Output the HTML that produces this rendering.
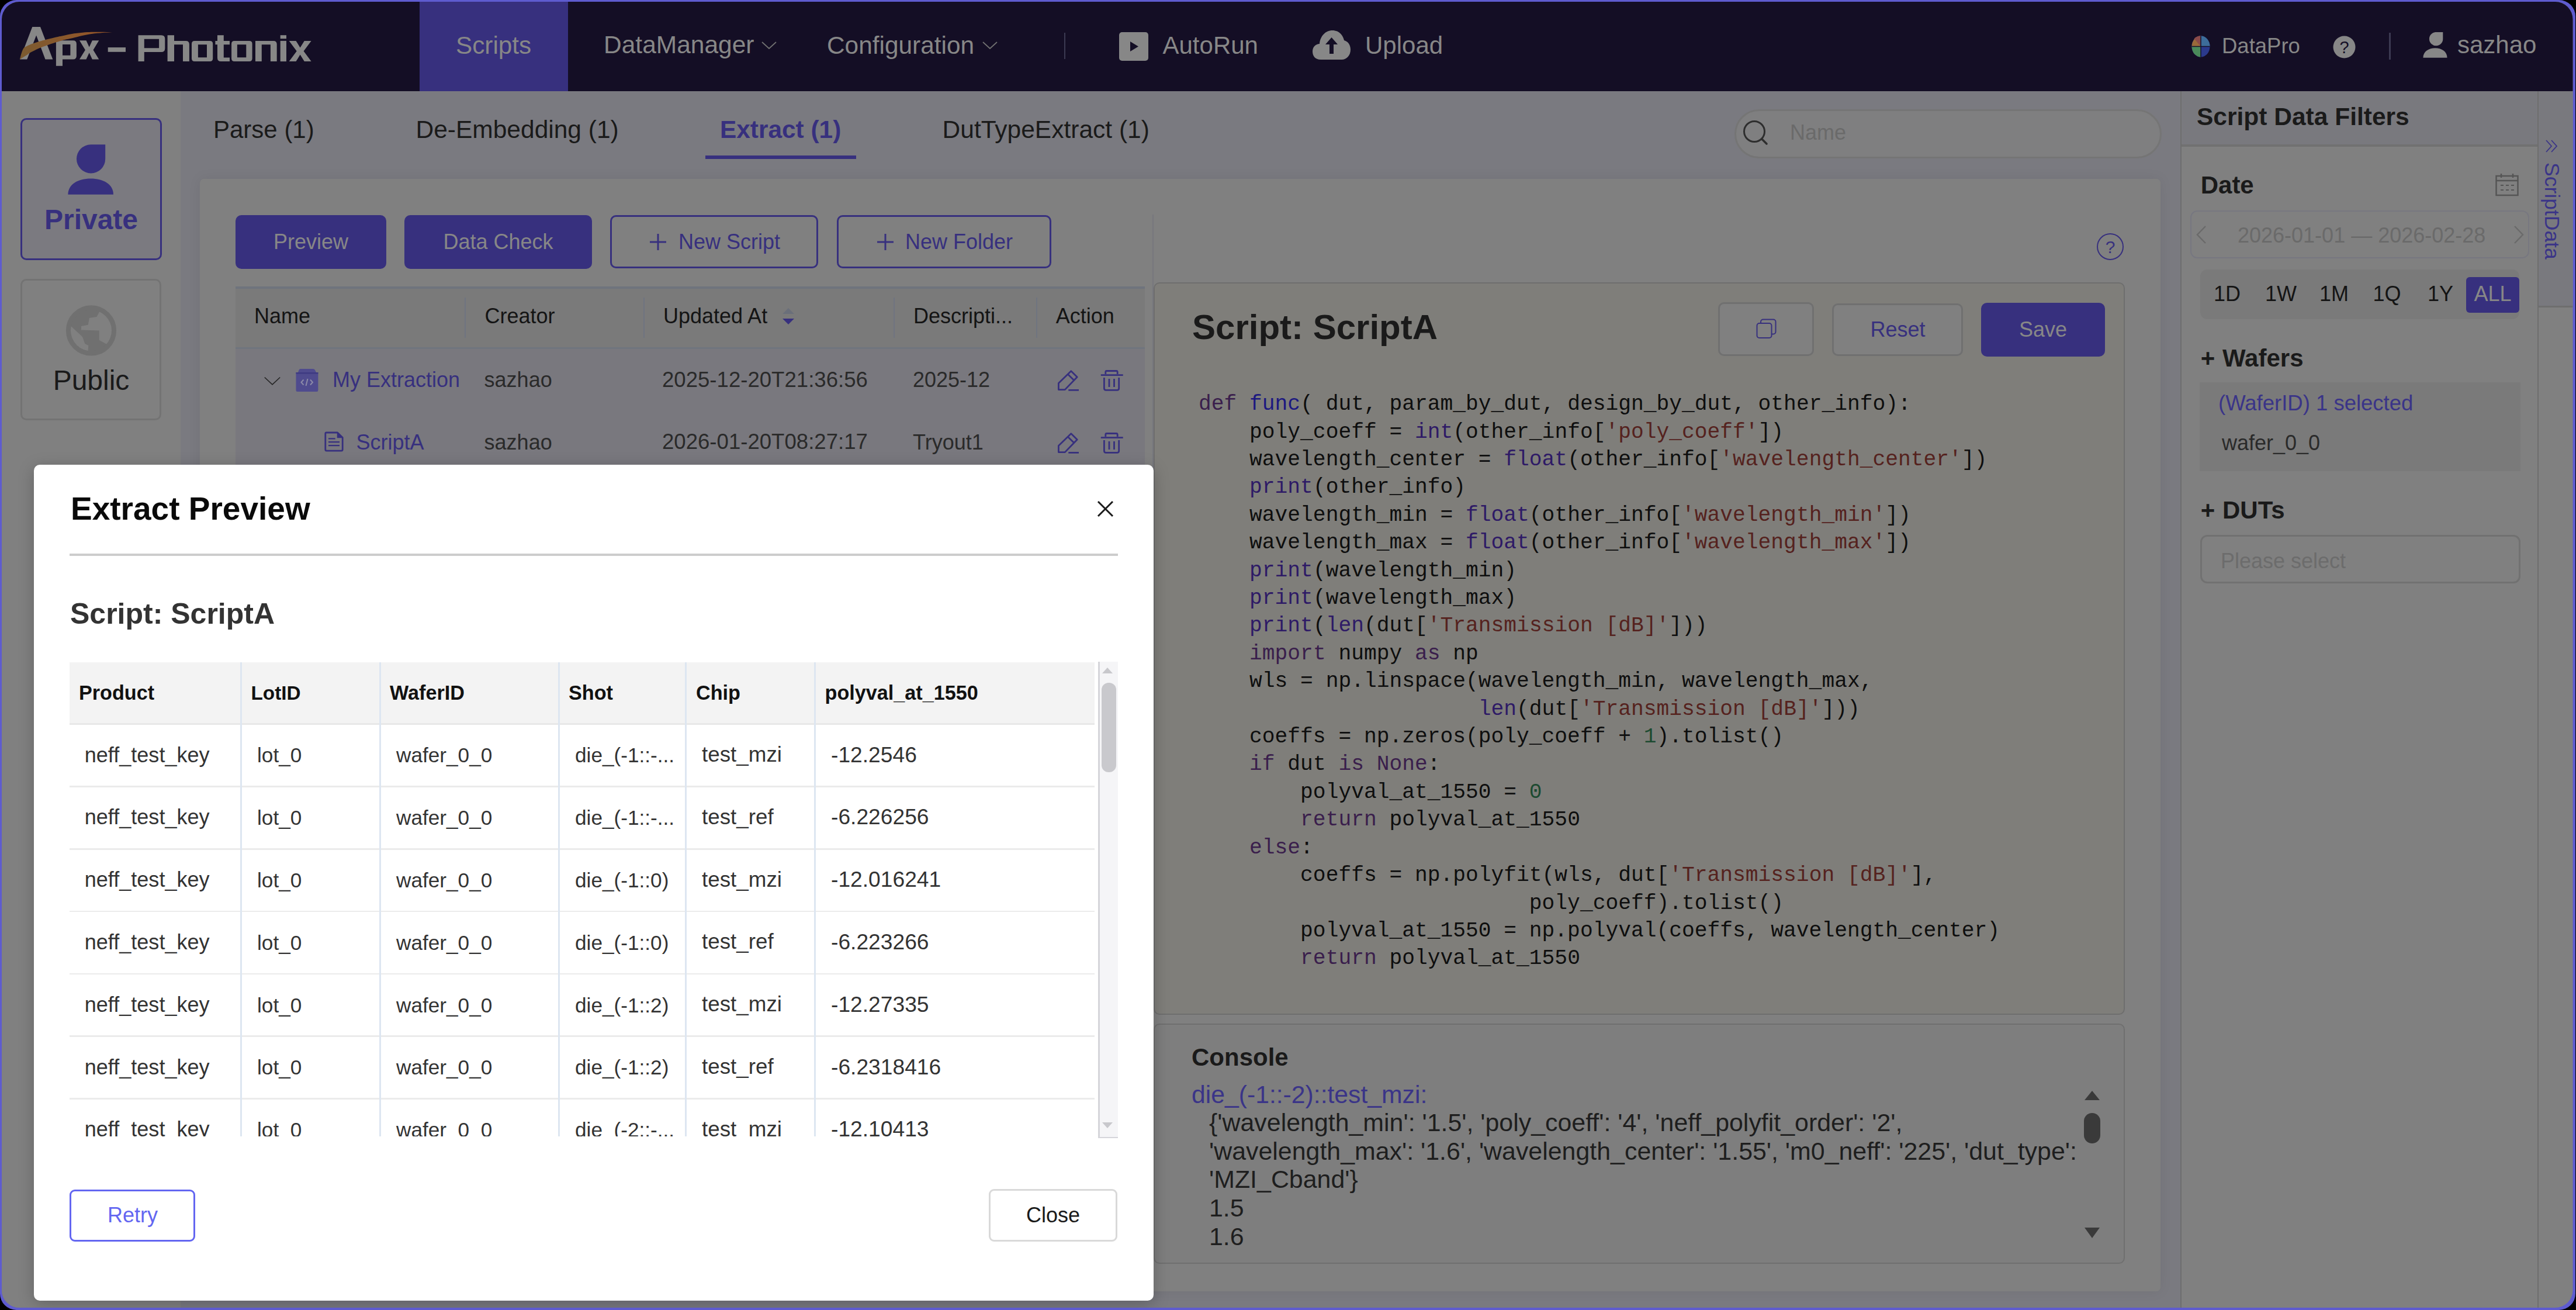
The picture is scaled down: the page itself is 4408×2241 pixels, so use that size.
<!DOCTYPE html>
<html><head><meta charset="utf-8"><title>Apx Photonix</title>
<style>
html,body{margin:0;padding:0;background:#000;}
body{width:4408px;height:2241px;position:relative;overflow:hidden;font-family:"Liberation Sans",sans-serif;}
.frame{position:absolute;left:0;top:0;width:4407px;height:2241px;border-radius:28px;background:#5e5bcf;}
.screen{position:absolute;left:0;top:0;width:4408px;height:2241px;clip-path:inset(3px 5.5px 4px 3px round 30px);background:#808080;}
.t{position:absolute;white-space:pre;}
.r{position:absolute;}
</style></head><body>
<div class="frame"></div>
<div class="screen">
<div class="r" style="left:0.0px;top:0.0px;width:4408.0px;height:156.0px;background:#140e25;"></div>
<svg class="r" style="left:0;top:0;width:560px;height:156px" viewBox="0 0 560 156"><defs><linearGradient id="sw" x1="0" y1="0" x2="1" y2="0"><stop offset="0" stop-color="#7a5a30"/><stop offset="1" stop-color="#9a5528"/></linearGradient></defs><path fill="#878787" d="M34,101.6 L55.3,46.1 L69,46.1 L90.3,101.6 L77.5,101.6 L62.1,60.6 L46.3,101.6 Z"/><path fill="#878787" fill-rule="evenodd" d="M95.9,112.7 V69.2 H125 Q130.9,69.2 130.9,75 V95.8 Q130.9,101.6 125,101.6 H107 V112.7 Z M107,76 H120.4 V94.8 H107 Z"/><path fill="#878787" d="M136,69.2 H147.5 L152.7,80.5 L157.9,69.2 H169.3 L159.5,85.4 L169.3,101.6 H157.9 L152.7,90.3 L147.5,101.6 H136 L145.9,85.4 Z"/><rect x="184.7" y="81.1" width="30.3" height="7.7" fill="#878787"/><path fill="#878787" fill-rule="evenodd" d="M236.6,105.1 V60.2 H276 Q282.3,60.2 282.3,66.5 V82.8 Q282.3,89.1 276,89.1 H246.8 V105.1 Z M246.8,66.8 H272.1 V82.3 H246.8 Z"/><path fill="#878787" d="M286.6,105.1 V60.2 H298 V69.9 H318 Q323.9,69.9 323.9,75.8 V105.1 H313 V76.3 H298 V105.1 Z"/><path fill="#878787" fill-rule="evenodd" d="M333,69.9 H359.2 Q364.2,69.9 364.2,74.9 V100.1 Q364.2,105.1 359.2,105.1 H333 Q328,105.1 328,100.1 V74.9 Q328,69.9 333,69.9 Z M338.9,76.3 V98.2 H354 V76.3 Z"/><path fill="#878787" d="M372,60.2 H382.8 V69.9 H393 V76.3 H382.8 V98.4 H393 V105.1 H378 Q372,105.1 372,99 V76.3 H368.4 V69.9 H372 Z"/><path fill="#878787" fill-rule="evenodd" d="M401.1,69.9 H426.6 Q431.6,69.9 431.6,74.9 V100.1 Q431.6,105.1 426.6,105.1 H401.1 Q396.1,105.1 396.1,100.1 V74.9 Q396.1,69.9 401.1,69.9 Z M405.9,76.3 V98.2 H421.3 V76.3 Z"/><path fill="#878787" d="M437,105.1 V69.9 H468 Q473.7,69.9 473.7,75.6 V105.1 H462.9 V76.3 H447.8 V105.1 Z"/><rect x="479.7" y="60.2" width="10.3" height="6" fill="#878787"/><rect x="479.7" y="69.9" width="10.3" height="35.2" fill="#878787"/><path fill="#878787" d="M494.7,69.9 H506.5 L513.6,81.5 L520.8,69.9 H532.6 L519.6,87.5 L532.6,105.1 H520.8 L513.6,93.5 L506.5,105.1 H494.7 L507.7,87.5 Z"/><path fill="url(#sw)" d="M34,101.6 C36,93 38,85 41.2,81.5 C48,77 55,75 59.2,73.4 C70,70 78,68 79.7,67.5 C95,64 100,62.5 106.1,61.5 C120,58.5 125,57.5 131.7,56.8 C145,55 155,54.8 161.6,54.8 C175,54.6 185,54.8 192.4,55.3 C185,55.6 175,56 161.6,57.2 C150,58.5 140,61 131.7,63.2 C120,66 112,67.5 106.1,69.2 C95,72.5 85,75.5 79.7,77.7 C70,81 64,83.5 59.2,86.2 C52,89.5 49,91.5 46.3,93.9 C40,97.5 37,99.5 34,101.6 Z"/></svg>
<div class="r" style="left:718.0px;top:0.0px;width:254.0px;height:156.0px;background:#37307e;"></div>
<div class="t " style="left:780.0px;top:56.5px;font-size:42.3px;line-height:42.3px;font-weight:400;color:#878787;font-family:'Liberation Sans', sans-serif;">Scripts</div>
<div class="t " style="left:1033.0px;top:56.4px;font-size:42.5px;line-height:42.5px;font-weight:400;color:#878787;font-family:'Liberation Sans', sans-serif;">DataManager</div>
<svg class="r" style="left:1302.0px;top:70.0px;width:28.0px;height:16.0px;" viewBox="0 0 28 16" preserveAspectRatio="none"><path d="M2 2 L14 13 L26 2" fill="none" stroke="#707070" stroke-width="1.8"/></svg>
<div class="t " style="left:1415.0px;top:56.5px;font-size:42.4px;line-height:42.4px;font-weight:400;color:#878787;font-family:'Liberation Sans', sans-serif;">Configuration</div>
<svg class="r" style="left:1680.0px;top:70.0px;width:28.0px;height:16.0px;" viewBox="0 0 28 16" preserveAspectRatio="none"><path d="M2 2 L14 13 L26 2" fill="none" stroke="#707070" stroke-width="1.8"/></svg>
<div class="r" style="left:1820.5px;top:56.0px;width:2.5px;height:45.0px;background:#3c3a52;"></div>
<svg class="r" style="left:1915.0px;top:55.0px;width:50.0px;height:49.0px;" viewBox="0 0 50 49" preserveAspectRatio="none"><rect x="0" y="0" width="50" height="49" rx="5" fill="#878787"/><path d="M19 16 L33 24.5 L19 33 Z" fill="#140e25"/></svg>
<div class="t " style="left:1989.5px;top:57.3px;font-size:42px;line-height:42px;font-weight:400;color:#878787;font-family:'Liberation Sans', sans-serif;">AutoRun</div>
<svg class="r" style="left:2246.0px;top:52.0px;width:65.0px;height:50.0px;" viewBox="0 0 65 50" preserveAspectRatio="none"><path d="M14 50 C4 50 0 43 0 36 C0 28 6 23 12 23 C13 10 22 0 34 0 C45 0 52 8 54 17 C61 19 65 25 65 33 C65 43 58 50 50 50 Z" fill="#878787"/><path d="M32.5 12 L43 24 L36 24 L36 40 L29 40 L29 24 L22 24 Z" fill="#140e25"/></svg>
<div class="t " style="left:2336.0px;top:57.3px;font-size:42px;line-height:42px;font-weight:400;color:#878787;font-family:'Liberation Sans', sans-serif;">Upload</div>
<svg class="r" style="left:3750.0px;top:61.0px;width:32.0px;height:37.0px;" viewBox="0 0 32 37" preserveAspectRatio="none"><ellipse cx="16" cy="18.5" rx="15.5" ry="18" fill="#2b3a8c"/><path d="M16 18.5 L16 0.5 A15.5 18 0 0 0 0.5 18.5 Z" fill="#9a6a3a"/><path d="M16 18.5 L16 0.5 A15.5 18 0 0 0 4.5 5 Z" fill="#8a4a4a"/><path d="M16 18.5 L0.5 18.5 A15.5 18 0 0 0 16 36.5 Z" fill="#4a8a5a"/><path d="M16 18.5 L16 0.5 A15.5 18 0 0 1 31.5 18.5 Z" fill="#3d6d9a"/><path d="M16 0.5 V36.5 M0.5 18.5 H31.5" stroke="#15102a" stroke-width="1.5"/></svg>
<div class="t " style="left:3802.0px;top:60.5px;font-size:36.5px;line-height:36.5px;font-weight:400;color:#878787;font-family:'Liberation Sans', sans-serif;">DataPro</div>
<svg class="r" style="left:3992.0px;top:61.0px;width:39.0px;height:39.0px;" viewBox="0 0 39 39" preserveAspectRatio="none"><circle cx="19.5" cy="19.5" r="19" fill="#878787"/><text x="19.5" y="30" text-anchor="middle" font-family="Liberation Sans" font-weight="400" font-size="29" fill="#140e25">?</text></svg>
<div class="r" style="left:4088.0px;top:56.0px;width:2.5px;height:46.0px;background:#3c3a52;"></div>
<svg class="r" style="left:4100px;top:0;width:120px;height:156px" viewBox="4100 0 120 156"><path fill="#878787" d="M4167.5,55 H4180.3 V66.7 A11.7 11.7 0 1 1 4167.5 55 Z"/><path fill="#878787" d="M4146.4,98.8 C4146.4,88 4156,82.2 4167,82.2 C4178,82.2 4187.5,88 4187.5,98.8 Z"/></svg>
<div class="t " style="left:4205.0px;top:56.3px;font-size:42px;line-height:42px;font-weight:400;color:#878787;font-family:'Liberation Sans', sans-serif;">sazhao</div>
<div class="r" style="left:0.0px;top:156.0px;width:309.0px;height:2085.0px;background:#808080;"></div>
<div class="r" style="left:34.5px;top:202.0px;width:242.5px;height:243.0px;background:#7b7a80;border:3px solid #37307e;border-radius:10px;box-sizing:border-box"></div>
<svg class="r" style="left:0;top:0;width:309px;height:720px" viewBox="0 0 309 720"><path fill="#37307e" d="M155.4,247.2 H180.2 V271.8 A24.6 24.6 0 1 1 155.4 247.2 Z"/><path fill="#37307e" d="M116.4,332.8 C116.4,315 134,305.5 155.2,305.5 C176.4,305.5 194,315 194,332.8 Z"/></svg>
<div class="t" style="left:-344.0px;width:1000px;text-align:center;top:352.2px;font-size:48px;line-height:48px;font-weight:700;color:#37307e;">Private</div>
<div class="r" style="left:34.7px;top:477.0px;width:241.8px;height:242.0px;background:#808080;border:3px solid #737373;border-radius:10px;box-sizing:border-box"></div>
<svg class="r" style="left:0;top:0;width:309px;height:720px" viewBox="0 0 309 720"><clipPath id="gc"><circle cx="156" cy="565.4" r="35"/></clipPath><circle cx="156" cy="565.4" r="38.6" fill="none" stroke="#707070" stroke-width="9"/><g clip-path="url(#gc)"><rect x="110" y="520" width="92" height="92" fill="#707070"/><path fill="#808080" d="M169.7,534.3 L170,515 L216,515 L216,605 L180.6,587.7 L169.7,581.8 L169.7,565.4 L139,564.6 L139,557.9 L150.8,555.8 L152.9,544 L165.5,541.9 Z"/><path fill="#808080" d="M122.2,558.7 L141.1,576.3 L145.3,588.1 L151.2,591 L150.8,598.6 L150.8,625 L96,625 L96,558.7 Z"/></g></svg>
<div class="t" style="left:-344.0px;width:1000px;text-align:center;top:627.2px;font-size:48px;line-height:48px;font-weight:400;color:#1a1a1a;">Public</div>
<div class="r" style="left:309.0px;top:156.0px;width:3422.0px;height:2085.0px;background:#7a7a80;"></div>
<div class="t " style="left:365.0px;top:201.3px;font-size:42px;line-height:42px;font-weight:400;color:#1a1a1a;font-family:'Liberation Sans', sans-serif;">Parse (1)</div>
<div class="t " style="left:711.5px;top:200.9px;font-size:42.5px;line-height:42.5px;font-weight:400;color:#1a1a1a;font-family:'Liberation Sans', sans-serif;">De-Embedding (1)</div>
<div class="t " style="left:1232.0px;top:201.0px;font-size:42.4px;line-height:42.4px;font-weight:700;color:#37307e;font-family:'Liberation Sans', sans-serif;">Extract (1)</div>
<div class="r" style="left:1207.0px;top:266.0px;width:258.0px;height:6.0px;background:#37307e;"></div>
<div class="t " style="left:1612.6px;top:200.9px;font-size:42.5px;line-height:42.5px;font-weight:400;color:#1a1a1a;font-family:'Liberation Sans', sans-serif;">DutTypeExtract (1)</div>
<div class="r" style="left:2968.0px;top:187.0px;width:731.0px;height:84.0px;background:#7f7f80;border:3px solid #757575;border-radius:42px;box-sizing:border-box"></div>
<svg class="r" style="left:2982.0px;top:205.0px;width:44.0px;height:45.0px;" viewBox="0 0 44 45" preserveAspectRatio="none"><circle cx="20" cy="20" r="17.5" fill="none" stroke="#2e2e2e" stroke-width="3"/><path d="M33 33 L41 41" stroke="#2e2e2e" stroke-width="3.5" stroke-linecap="round"/></svg>
<div class="t " style="left:3063.0px;top:209.4px;font-size:36px;line-height:36px;font-weight:400;color:#6a6a6a;font-family:'Liberation Sans', sans-serif;">Name</div>
<div class="r" style="left:342.0px;top:306.0px;width:3355.0px;height:1903.0px;background:#808080;border-radius:7px;box-shadow:0 0 22px rgba(0,0,0,0.07)"></div>
<div class="r" style="left:403.0px;top:368.0px;width:258.0px;height:92.0px;background:#37307e;border-radius:10px"></div>
<div class="t" style="left:32.0px;width:1000px;text-align:center;top:395.9px;font-size:36px;line-height:36px;font-weight:400;color:#878787;">Preview</div>
<div class="r" style="left:692.0px;top:368.0px;width:321.0px;height:92.0px;background:#37307e;border-radius:10px"></div>
<div class="t" style="left:352.5px;width:1000px;text-align:center;top:395.9px;font-size:36px;line-height:36px;font-weight:400;color:#878787;">Data Check</div>
<div class="r" style="left:1043.5px;top:367.7px;width:356.5px;height:91.3px;background:transparent;border:3px solid #37307e;border-radius:10px;box-sizing:border-box"></div>
<svg class="r" style="left:1111.0px;top:399.0px;width:30.0px;height:30.0px;" viewBox="0 0 30 30" preserveAspectRatio="none"><path d="M15 1 V29 M1 15 H29" stroke="#37307e" stroke-width="3"/></svg>
<div class="t " style="left:1161.0px;top:395.7px;font-size:36px;line-height:36px;font-weight:400;color:#37307e;font-family:'Liberation Sans', sans-serif;">New Script</div>
<div class="r" style="left:1431.7px;top:367.7px;width:367.3px;height:91.3px;background:transparent;border:3px solid #37307e;border-radius:10px;box-sizing:border-box"></div>
<svg class="r" style="left:1499.6px;top:399.0px;width:30.0px;height:30.0px;" viewBox="0 0 30 30" preserveAspectRatio="none"><path d="M15 1 V29 M1 15 H29" stroke="#37307e" stroke-width="3"/></svg>
<div class="t " style="left:1549.0px;top:395.7px;font-size:36px;line-height:36px;font-weight:400;color:#37307e;font-family:'Liberation Sans', sans-serif;">New Folder</div>
<svg class="r" style="left:3587.0px;top:398.0px;width:48.0px;height:48.0px;" viewBox="0 0 48 48" preserveAspectRatio="none"><circle cx="24" cy="24" r="22" fill="none" stroke="#37307e" stroke-width="2"/><text x="24" y="35" text-anchor="middle" font-family="Liberation Sans" font-weight="400" font-size="30" fill="#37307e">?</text></svg>
<div class="r" style="left:403.0px;top:490.0px;width:1556.0px;height:4.0px;background:#6f747d;"></div>
<div class="r" style="left:403.0px;top:494.0px;width:1556.0px;height:100.0px;background:#7a7a7a;"></div>
<div class="r" style="left:403.0px;top:594.0px;width:1556.0px;height:2.5px;background:#70757e;"></div>
<div class="r" style="left:795.0px;top:509.0px;width:2.0px;height:69.0px;background:#6f7480;"></div>
<div class="r" style="left:1101.0px;top:509.0px;width:2.0px;height:69.0px;background:#6f7480;"></div>
<div class="r" style="left:1529.0px;top:509.0px;width:2.0px;height:69.0px;background:#6f7480;"></div>
<div class="r" style="left:1772.5px;top:509.0px;width:2.0px;height:69.0px;background:#6f7480;"></div>
<div class="t " style="left:435.0px;top:523.4px;font-size:36px;line-height:36px;font-weight:400;color:#141414;font-family:'Liberation Sans', sans-serif;">Name</div>
<div class="t " style="left:829.5px;top:523.4px;font-size:36px;line-height:36px;font-weight:400;color:#141414;font-family:'Liberation Sans', sans-serif;">Creator</div>
<div class="t " style="left:1135.0px;top:523.4px;font-size:36px;line-height:36px;font-weight:400;color:#141414;font-family:'Liberation Sans', sans-serif;">Updated At</div>
<svg class="r" style="left:1337.0px;top:527.0px;width:24.0px;height:28.0px;" viewBox="0 0 24 28" preserveAspectRatio="none"><path d="M12 0 L22 10 L2 10 Z" fill="#6a6f7a"/><path d="M12 28 L22 18 L2 18 Z" fill="#37307e"/></svg>
<div class="t " style="left:1563.0px;top:523.4px;font-size:36px;line-height:36px;font-weight:400;color:#141414;font-family:'Liberation Sans', sans-serif;">Descripti...</div>
<div class="t " style="left:1806.7px;top:523.4px;font-size:36px;line-height:36px;font-weight:400;color:#141414;font-family:'Liberation Sans', sans-serif;">Action</div>
<div class="r" style="left:403.0px;top:596.5px;width:1556.0px;height:198.5px;background:#79787e;"></div>
<svg class="r" style="left:440px;top:620px;width:160px;height:160px" viewBox="440 620 160 160"><path d="M452.8,645.5 L466,657.8 L479.2,645.5" fill="none" stroke="#262626" stroke-width="1.7"/><path d="M514,631 H535.5 Q538,631 539,633 L541,637 H544.4 V667.5 Q544.4,670 542,670 H509 Q506.5,670 506.5,667.5 V637 H510 L511.5,633 Q512.5,631 514,631 Z" fill="#4f4b8e"/><rect x="506.5" y="637" width="37.9" height="2.5" fill="#3e3a82"/><path d="M519.5,649.5 L515.5,654 L519.5,658.5 M531,649.5 L535,654 L531,658.5 M526.5,648 L523.5,660" fill="none" stroke="#8c8aa8" stroke-width="2"/><path d="M558.5,740 H577.5 L586.2,748.5 V769 Q586.2,771.2 584,771.2 H558.8 Q556.8,771.2 556.8,769 V742 Q556.8,740 558.5,740 Z" fill="none" stroke="#37307e" stroke-width="2.8" stroke-linejoin="round"/><path d="M577.5,740.5 V748.5 H586" fill="#37307e" stroke="#37307e" stroke-width="1.5"/><path d="M562,750.4 H573.7 M562,756.1 H581 M562,762.2 H581" stroke="#37307e" stroke-width="2.2"/></svg>
<div class="t " style="left:569.0px;top:632.4px;font-size:36px;line-height:36px;font-weight:400;color:#37307e;font-family:'Liberation Sans', sans-serif;">My Extraction</div>
<div class="t " style="left:828.6px;top:632.4px;font-size:36px;line-height:36px;font-weight:400;color:#2a2a2a;font-family:'Liberation Sans', sans-serif;">sazhao</div>
<div class="t " style="left:1133.0px;top:631.9px;font-size:36.6px;line-height:36.6px;font-weight:400;color:#2a2a2a;font-family:'Liberation Sans', sans-serif;">2025-12-20T21:36:56</div>
<div class="t " style="left:1562.0px;top:632.4px;font-size:36px;line-height:36px;font-weight:400;color:#2a2a2a;font-family:'Liberation Sans', sans-serif;">2025-12</div>
<div class="t " style="left:609.6px;top:738.9px;font-size:36px;line-height:36px;font-weight:400;color:#37307e;font-family:'Liberation Sans', sans-serif;">ScriptA</div>
<div class="t " style="left:828.6px;top:738.9px;font-size:36px;line-height:36px;font-weight:400;color:#2a2a2a;font-family:'Liberation Sans', sans-serif;">sazhao</div>
<div class="t " style="left:1133.0px;top:738.4px;font-size:36.6px;line-height:36.6px;font-weight:400;color:#2a2a2a;font-family:'Liberation Sans', sans-serif;">2026-01-20T08:27:17</div>
<div class="t " style="left:1562.0px;top:738.9px;font-size:36px;line-height:36px;font-weight:400;color:#2a2a2a;font-family:'Liberation Sans', sans-serif;">Tryout1</div>
<svg class="r" style="left:1780px;top:620px;width:160px;height:60px" viewBox="1780 620 160 60" fill="none" stroke="#37307e" stroke-width="2.8" stroke-linejoin="round"><path d="M1811.4,655.5 L1832.8,634.8 L1843.2,645 L1822.3,666.6 L1811.4,666.6 Z M1827.3,640.3 L1837.8,650.5 M1828.3,667.4 H1846"/><path d="M1883.8,641.6 H1921.7 M1891.8,640 V636.5 Q1891.8,634.5 1893.8,634.5 H1910.2 Q1912.2,634.5 1912.2,636.5 V640 M1889.4,646 V664.3 Q1889.4,667.3 1892.4,667.3 H1911.7 Q1914.7,667.3 1914.7,664.3 V646 M1898,648 V662 M1906.5,648 V662"/></svg>
<svg class="r" style="left:1780px;top:726.5px;width:160px;height:60px" viewBox="1780 620 160 60" fill="none" stroke="#37307e" stroke-width="2.8" stroke-linejoin="round"><path d="M1811.4,655.5 L1832.8,634.8 L1843.2,645 L1822.3,666.6 L1811.4,666.6 Z M1827.3,640.3 L1837.8,650.5 M1828.3,667.4 H1846"/><path d="M1883.8,641.6 H1921.7 M1891.8,640 V636.5 Q1891.8,634.5 1893.8,634.5 H1910.2 Q1912.2,634.5 1912.2,636.5 V640 M1889.4,646 V664.3 Q1889.4,667.3 1892.4,667.3 H1911.7 Q1914.7,667.3 1914.7,664.3 V646 M1898,648 V662 M1906.5,648 V662"/></svg>
<div class="r" style="left:1972.0px;top:366.6px;width:2.3px;height:1842.4px;background:#76777d;"></div>
<div class="r" style="left:1974.3px;top:483.0px;width:1661.7px;height:1253.0px;background:#7f7e7a;border:2.5px solid #6e6e6e;border-radius:10px;box-sizing:border-box"></div>
<div class="t " style="left:2040.0px;top:529.5px;font-size:60px;line-height:60px;font-weight:700;color:#1a1a1a;font-family:'Liberation Sans', sans-serif;">Script: ScriptA</div>
<div class="r" style="left:2940.0px;top:517.0px;width:163.5px;height:92.0px;background:#808080;border:3px solid #707070;border-radius:10px;box-sizing:border-box"></div>
<svg class="r" style="left:3005.0px;top:544.5px;width:35.0px;height:34.5px;" viewBox="0 0 35 34.5" preserveAspectRatio="none"><rect x="8" y="1.5" width="25.5" height="25" rx="4" fill="none" stroke="#37307e" stroke-width="2"/><rect x="1.5" y="8" width="25" height="25" rx="4" fill="#808080" stroke="#37307e" stroke-width="2"/></svg>
<div class="r" style="left:3135.4px;top:519.0px;width:223.6px;height:90.0px;background:#808080;border:3px solid #707070;border-radius:10px;box-sizing:border-box"></div>
<div class="t" style="left:2747.5px;width:1000px;text-align:center;top:545.9px;font-size:36px;line-height:36px;font-weight:400;color:#37307e;">Reset</div>
<div class="r" style="left:3390.0px;top:518.0px;width:212.0px;height:92.0px;background:#37307e;border-radius:10px"></div>
<div class="t" style="left:2996.0px;width:1000px;text-align:center;top:545.9px;font-size:36px;line-height:36px;font-weight:400;color:#878787;">Save</div>
<div class="t" style="left:2051px;top:668.2px;font-family:'Liberation Mono',monospace;font-size:36.27px;line-height:47.4px;color:#0e0e0e;white-space:pre"><span style="color:#3a1e4c">def</span> <span style="color:#1c1880">func</span>( dut, param_by_dut, design_by_dut, other_info):
    poly_coeff = <span style="color:#2e1a66">int</span>(other_info[<span style="color:#55221e">&#x27;poly_coeff&#x27;</span>])
    wavelength_center = <span style="color:#2e1a66">float</span>(other_info[<span style="color:#55221e">&#x27;wavelength_center&#x27;</span>])
    <span style="color:#2e1a66">print</span>(other_info)
    wavelength_min = <span style="color:#2e1a66">float</span>(other_info[<span style="color:#55221e">&#x27;wavelength_min&#x27;</span>])
    wavelength_max = <span style="color:#2e1a66">float</span>(other_info[<span style="color:#55221e">&#x27;wavelength_max&#x27;</span>])
    <span style="color:#2e1a66">print</span>(wavelength_min)
    <span style="color:#2e1a66">print</span>(wavelength_max)
    <span style="color:#2e1a66">print</span>(<span style="color:#2e1a66">len</span>(dut[<span style="color:#55221e">&#x27;Transmission [dB]&#x27;</span>]))
    <span style="color:#3a1e4c">import</span> numpy <span style="color:#3a1e4c">as</span> np
    wls = np.linspace(wavelength_min, wavelength_max,
                      <span style="color:#2e1a66">len</span>(dut[<span style="color:#55221e">&#x27;Transmission [dB]&#x27;</span>]))
    coeffs = np.zeros(poly_coeff + <span style="color:#1c4a30">1</span>).tolist()
    <span style="color:#3a1e4c">if</span> dut <span style="color:#3a1e4c">is</span> <span style="color:#3a1e4c">None</span>:
        polyval_at_1550 = <span style="color:#1c4a30">0</span>
        <span style="color:#3a1e4c">return</span> polyval_at_1550
    <span style="color:#3a1e4c">else</span>:
        coeffs = np.polyfit(wls, dut[<span style="color:#55221e">&#x27;Transmission [dB]&#x27;</span>],
                          poly_coeff).tolist()
        polyval_at_1550 = np.polyval(coeffs, wavelength_center)
        <span style="color:#3a1e4c">return</span> polyval_at_1550</div>
<div class="r" style="left:1974.3px;top:1751.0px;width:1661.7px;height:411.0px;background:#7e7e7e;border:2.5px solid #6f6f6f;border-radius:10px;box-sizing:border-box"></div>
<div class="t " style="left:2039.0px;top:1787.8px;font-size:42px;line-height:42px;font-weight:700;color:#1a1a1a;font-family:'Liberation Sans', sans-serif;">Console</div>
<div class="t " style="left:2039.0px;top:1850.7px;font-size:42.7px;line-height:42.7px;font-weight:400;color:#3a3488;font-family:'Liberation Sans', sans-serif;">die_(-1::-2)::test_mzi:</div>
<div class="t " style="left:2069.0px;top:1899.0px;font-size:42.9px;line-height:42.9px;font-weight:400;color:#1e1e1e;font-family:'Liberation Sans', sans-serif;">{&#x27;wavelength_min&#x27;: &#x27;1.5&#x27;, &#x27;poly_coeff&#x27;: &#x27;4&#x27;, &#x27;neff_polyfit_order&#x27;: &#x27;2&#x27;,</div>
<div class="t " style="left:2069.0px;top:1947.7px;font-size:42.9px;line-height:42.9px;font-weight:400;color:#1e1e1e;font-family:'Liberation Sans', sans-serif;">&#x27;wavelength_max&#x27;: &#x27;1.6&#x27;, &#x27;wavelength_center&#x27;: &#x27;1.55&#x27;, &#x27;m0_neff&#x27;: &#x27;225&#x27;, &#x27;dut_type&#x27;:</div>
<div class="t " style="left:2069.0px;top:1996.4px;font-size:42.9px;line-height:42.9px;font-weight:400;color:#1e1e1e;font-family:'Liberation Sans', sans-serif;">&#x27;MZI_Cband&#x27;}</div>
<div class="t " style="left:2069.0px;top:2045.1px;font-size:42.9px;line-height:42.9px;font-weight:400;color:#1e1e1e;font-family:'Liberation Sans', sans-serif;">1.5</div>
<div class="t " style="left:2069.0px;top:2093.8px;font-size:42.9px;line-height:42.9px;font-weight:400;color:#1e1e1e;font-family:'Liberation Sans', sans-serif;">1.6</div>
<svg class="r" style="left:3565.0px;top:1864.0px;width:30.0px;height:20.0px;" viewBox="0 0 30 20" preserveAspectRatio="none"><path d="M15 2 L28 18 L2 18 Z" fill="#3a3a3a"/></svg>
<div class="r" style="left:3566.0px;top:1904.0px;width:28.0px;height:52.0px;background:#3a3a3a;border-radius:14px"></div>
<svg class="r" style="left:3565.0px;top:2098.0px;width:30.0px;height:22.0px;" viewBox="0 0 30 22" preserveAspectRatio="none"><path d="M15 20 L28 2 L2 2 Z" fill="#3a3a3a"/></svg>
<div class="r" style="left:3731.0px;top:156.0px;width:613.0px;height:2085.0px;background:#808080;"></div>
<div class="r" style="left:3730.6px;top:156.0px;width:2.6px;height:2085.0px;background:#6e6e6e;"></div>
<div class="r" style="left:3733.2px;top:156.0px;width:608.8px;height:91.0px;background:#79797e;"></div>
<div class="r" style="left:3733.2px;top:247.0px;width:608.8px;height:3.5px;background:#717171;"></div>
<div class="r" style="left:4342.0px;top:156.0px;width:2.0px;height:2085.0px;background:#6e6e6e;"></div>
<div class="r" style="left:4344.0px;top:156.0px;width:64.0px;height:367.0px;background:#79797e;"></div>
<div class="r" style="left:4344.0px;top:523.0px;width:64.0px;height:2.5px;background:#6e6e6e;"></div>
<div class="t " style="left:3759.0px;top:178.5px;font-size:42.5px;line-height:42.5px;font-weight:700;color:#1a1a1a;font-family:'Liberation Sans', sans-serif;">Script Data Filters</div>
<div class="t " style="left:3765.7px;top:296.3px;font-size:42px;line-height:42px;font-weight:700;color:#1a1a1a;font-family:'Liberation Sans', sans-serif;">Date</div>
<svg class="r" style="left:4270.0px;top:296.0px;width:40.0px;height:40.0px;" viewBox="0 0 40 40" preserveAspectRatio="none"><rect x="1.5" y="5" width="37" height="33" fill="none" stroke="#555" stroke-width="2.5"/><path d="M1.5 13 H38.5 M10 1 V8 M30 1 V8" stroke="#555" stroke-width="2.5"/><path d="M9 21 H14 M18 21 H23 M27 21 H32 M9 29 H14 M18 29 H23 M27 29 H32" stroke="#555" stroke-width="2"/></svg>
<div class="r" style="left:3748.0px;top:360.0px;width:580.0px;height:81.5px;background:#808080;border:2.5px solid #777780;border-radius:12px;box-sizing:border-box"></div>
<svg class="r" style="left:3757.0px;top:385.0px;width:20.0px;height:33.0px;" viewBox="0 0 20 33" preserveAspectRatio="none"><path d="M17 2 L3 16.5 L17 31" fill="none" stroke="#6a6a6a" stroke-width="2.5"/></svg>
<div class="t " style="left:3829.0px;top:384.9px;font-size:36px;line-height:36px;font-weight:400;color:#6a6a6a;font-family:'Liberation Sans', sans-serif;">2026-01-01 — 2026-02-28</div>
<svg class="r" style="left:4300.0px;top:385.0px;width:20.0px;height:33.0px;" viewBox="0 0 20 33" preserveAspectRatio="none"><path d="M3 2 L17 16.5 L3 31" fill="none" stroke="#6a6a6a" stroke-width="2.5"/></svg>
<div class="r" style="left:3764.6px;top:461.4px;width:546.1px;height:85.1px;background:#7a7a7a;border-radius:12px"></div>
<div class="t " style="left:3788.0px;top:485.4px;font-size:36px;line-height:36px;font-weight:400;color:#141414;font-family:'Liberation Sans', sans-serif;">1D</div>
<div class="t " style="left:3876.0px;top:485.4px;font-size:36px;line-height:36px;font-weight:400;color:#141414;font-family:'Liberation Sans', sans-serif;">1W</div>
<div class="t " style="left:3969.0px;top:485.4px;font-size:36px;line-height:36px;font-weight:400;color:#141414;font-family:'Liberation Sans', sans-serif;">1M</div>
<div class="t " style="left:4060.6px;top:485.4px;font-size:36px;line-height:36px;font-weight:400;color:#141414;font-family:'Liberation Sans', sans-serif;">1Q</div>
<div class="t " style="left:4154.0px;top:485.4px;font-size:36px;line-height:36px;font-weight:400;color:#141414;font-family:'Liberation Sans', sans-serif;">1Y</div>
<div class="r" style="left:4219.6px;top:474.0px;width:91.1px;height:60.6px;background:#37307e;border-radius:6px"></div>
<div class="t " style="left:4233.5px;top:485.4px;font-size:36px;line-height:36px;font-weight:400;color:#878787;font-family:'Liberation Sans', sans-serif;">ALL</div>
<div class="t " style="left:3765.7px;top:591.8px;font-size:42px;line-height:42px;font-weight:700;color:#1a1a1a;font-family:'Liberation Sans', sans-serif;">+</div>
<div class="t " style="left:3803.0px;top:591.8px;font-size:42px;line-height:42px;font-weight:700;color:#1a1a1a;font-family:'Liberation Sans', sans-serif;">Wafers</div>
<div class="r" style="left:3764.0px;top:654.0px;width:549.0px;height:152.0px;background:#7a7a7a;"></div>
<div class="t " style="left:3796.0px;top:671.8px;font-size:36.5px;line-height:36.5px;font-weight:400;color:#3a3488;font-family:'Liberation Sans', sans-serif;">(WaferID) 1 selected</div>
<div class="t " style="left:3802.0px;top:740.4px;font-size:36px;line-height:36px;font-weight:400;color:#2a2a2a;font-family:'Liberation Sans', sans-serif;">wafer_0_0</div>
<div class="t " style="left:3765.7px;top:851.5px;font-size:42px;line-height:42px;font-weight:700;color:#1a1a1a;font-family:'Liberation Sans', sans-serif;">+</div>
<div class="t " style="left:3803.0px;top:851.5px;font-size:42px;line-height:42px;font-weight:700;color:#1a1a1a;font-family:'Liberation Sans', sans-serif;">DUTs</div>
<div class="r" style="left:3764.6px;top:915.0px;width:548.4px;height:83.0px;background:#808080;border:3px solid #717171;border-radius:12px;box-sizing:border-box"></div>
<div class="t " style="left:3800.0px;top:942.0px;font-size:36px;line-height:36px;font-weight:400;color:#6c6c6c;font-family:'Liberation Sans', sans-serif;">Please select</div>
<svg class="r" style="left:4355.0px;top:238.0px;width:23.0px;height:24.0px;" viewBox="0 0 23 24" preserveAspectRatio="none"><path d="M2 2 L11 12 L2 22 M11 2 L20 12 L11 22" fill="none" stroke="#3a3488" stroke-width="1.8"/></svg>
<div class="t" style="left:4366px;top:277.5px;font-size:35.5px;line-height:35.5px;color:#3a3488;transform-origin:0 0;transform:rotate(90deg) translate(0,-17.75px);white-space:nowrap">ScriptData</div>
<div class="r" style="left:58.0px;top:795.0px;width:1916.0px;height:1429.5px;background:#ffffff;border-radius:10px;box-shadow:0 6px 28px rgba(0,0,0,0.22)"></div>
<div class="t " style="left:121.0px;top:843.2px;font-size:55px;line-height:55px;font-weight:700;color:#0a0a0a;font-family:'Liberation Sans', sans-serif;">Extract Preview</div>
<svg class="r" style="left:1877.0px;top:855.5px;width:29.0px;height:29.0px;" viewBox="0 0 29 29" preserveAspectRatio="none"><path d="M2 2 L27 27 M27 2 L2 27" stroke="#1a1a1a" stroke-width="3"/></svg>
<div class="r" style="left:119.0px;top:947.0px;width:1794.0px;height:3.5px;background:#cccccc;"></div>
<div class="t " style="left:120.0px;top:1024.5px;font-size:50px;line-height:50px;font-weight:700;color:#333333;font-family:'Liberation Sans', sans-serif;">Script: ScriptA</div>
<div class="r" style="left:119.0px;top:1132.6px;width:1754.0px;height:104.8px;background:#f3f3f3;"></div>
<div class="r" style="left:119.0px;top:1237.4px;width:1754.0px;height:2.6px;background:#e8e8e8;"></div>
<div class="t " style="left:135.0px;top:1167.9px;font-size:34.2px;line-height:34.2px;font-weight:700;color:#111111;font-family:'Liberation Sans', sans-serif;">Product</div>
<div class="t " style="left:429.5px;top:1168.7px;font-size:33.3px;line-height:33.3px;font-weight:700;color:#111111;font-family:'Liberation Sans', sans-serif;">LotID</div>
<div class="t " style="left:667.0px;top:1167.9px;font-size:34.2px;line-height:34.2px;font-weight:700;color:#111111;font-family:'Liberation Sans', sans-serif;">WaferID</div>
<div class="t " style="left:973.0px;top:1167.9px;font-size:34.2px;line-height:34.2px;font-weight:700;color:#111111;font-family:'Liberation Sans', sans-serif;">Shot</div>
<div class="t " style="left:1191.0px;top:1167.9px;font-size:34.2px;line-height:34.2px;font-weight:700;color:#111111;font-family:'Liberation Sans', sans-serif;">Chip</div>
<div class="t " style="left:1411.5px;top:1167.9px;font-size:34.2px;line-height:34.2px;font-weight:700;color:#111111;font-family:'Liberation Sans', sans-serif;">polyval_at_1550</div>
<div class="r" style="left:0;top:1240px;width:1880px;height:704px;overflow:hidden">
<div class="t " style="left:144.7px;top:33.5px;font-size:36.1px;line-height:36.1px;font-weight:400;color:#333333;font-family:'Liberation Sans', sans-serif;">neff_test_key</div>
<div class="t " style="left:440.0px;top:34.3px;font-size:35.2px;line-height:35.2px;font-weight:400;color:#333333;font-family:'Liberation Sans', sans-serif;">lot_0</div>
<div class="t " style="left:678.0px;top:34.3px;font-size:35.2px;line-height:35.2px;font-weight:400;color:#333333;font-family:'Liberation Sans', sans-serif;">wafer_0_0</div>
<div class="t " style="left:984.0px;top:34.3px;font-size:35.2px;line-height:35.2px;font-weight:400;color:#333333;font-family:'Liberation Sans', sans-serif;">die_(-1::-...</div>
<div class="t " style="left:1201.0px;top:32.9px;font-size:36.8px;line-height:36.8px;font-weight:400;color:#333333;font-family:'Liberation Sans', sans-serif;">test_mzi</div>
<div class="t " style="left:1422.0px;top:32.6px;font-size:37.2px;line-height:37.2px;font-weight:400;color:#333333;font-family:'Liberation Sans', sans-serif;">-12.2546</div>
<div class="r" style="left:119.0px;top:104.2px;width:1754.0px;height:2.6px;background:#ebebeb;"></div>
<div class="t " style="left:144.7px;top:140.3px;font-size:36.1px;line-height:36.1px;font-weight:400;color:#333333;font-family:'Liberation Sans', sans-serif;">neff_test_key</div>
<div class="t " style="left:440.0px;top:141.1px;font-size:35.2px;line-height:35.2px;font-weight:400;color:#333333;font-family:'Liberation Sans', sans-serif;">lot_0</div>
<div class="t " style="left:678.0px;top:141.1px;font-size:35.2px;line-height:35.2px;font-weight:400;color:#333333;font-family:'Liberation Sans', sans-serif;">wafer_0_0</div>
<div class="t " style="left:984.0px;top:141.1px;font-size:35.2px;line-height:35.2px;font-weight:400;color:#333333;font-family:'Liberation Sans', sans-serif;">die_(-1::-...</div>
<div class="t " style="left:1201.0px;top:139.7px;font-size:36.8px;line-height:36.8px;font-weight:400;color:#333333;font-family:'Liberation Sans', sans-serif;">test_ref</div>
<div class="t " style="left:1422.0px;top:139.4px;font-size:37.2px;line-height:37.2px;font-weight:400;color:#333333;font-family:'Liberation Sans', sans-serif;">-6.226256</div>
<div class="r" style="left:119.0px;top:211.0px;width:1754.0px;height:2.6px;background:#ebebeb;"></div>
<div class="t " style="left:144.7px;top:247.1px;font-size:36.1px;line-height:36.1px;font-weight:400;color:#333333;font-family:'Liberation Sans', sans-serif;">neff_test_key</div>
<div class="t " style="left:440.0px;top:247.9px;font-size:35.2px;line-height:35.2px;font-weight:400;color:#333333;font-family:'Liberation Sans', sans-serif;">lot_0</div>
<div class="t " style="left:678.0px;top:247.9px;font-size:35.2px;line-height:35.2px;font-weight:400;color:#333333;font-family:'Liberation Sans', sans-serif;">wafer_0_0</div>
<div class="t " style="left:984.0px;top:247.9px;font-size:35.2px;line-height:35.2px;font-weight:400;color:#333333;font-family:'Liberation Sans', sans-serif;">die_(-1::0)</div>
<div class="t " style="left:1201.0px;top:246.5px;font-size:36.8px;line-height:36.8px;font-weight:400;color:#333333;font-family:'Liberation Sans', sans-serif;">test_mzi</div>
<div class="t " style="left:1422.0px;top:246.2px;font-size:37.2px;line-height:37.2px;font-weight:400;color:#333333;font-family:'Liberation Sans', sans-serif;">-12.016241</div>
<div class="r" style="left:119.0px;top:317.8px;width:1754.0px;height:2.6px;background:#ebebeb;"></div>
<div class="t " style="left:144.7px;top:353.9px;font-size:36.1px;line-height:36.1px;font-weight:400;color:#333333;font-family:'Liberation Sans', sans-serif;">neff_test_key</div>
<div class="t " style="left:440.0px;top:354.7px;font-size:35.2px;line-height:35.2px;font-weight:400;color:#333333;font-family:'Liberation Sans', sans-serif;">lot_0</div>
<div class="t " style="left:678.0px;top:354.7px;font-size:35.2px;line-height:35.2px;font-weight:400;color:#333333;font-family:'Liberation Sans', sans-serif;">wafer_0_0</div>
<div class="t " style="left:984.0px;top:354.7px;font-size:35.2px;line-height:35.2px;font-weight:400;color:#333333;font-family:'Liberation Sans', sans-serif;">die_(-1::0)</div>
<div class="t " style="left:1201.0px;top:353.3px;font-size:36.8px;line-height:36.8px;font-weight:400;color:#333333;font-family:'Liberation Sans', sans-serif;">test_ref</div>
<div class="t " style="left:1422.0px;top:353.0px;font-size:37.2px;line-height:37.2px;font-weight:400;color:#333333;font-family:'Liberation Sans', sans-serif;">-6.223266</div>
<div class="r" style="left:119.0px;top:424.6px;width:1754.0px;height:2.6px;background:#ebebeb;"></div>
<div class="t " style="left:144.7px;top:460.7px;font-size:36.1px;line-height:36.1px;font-weight:400;color:#333333;font-family:'Liberation Sans', sans-serif;">neff_test_key</div>
<div class="t " style="left:440.0px;top:461.5px;font-size:35.2px;line-height:35.2px;font-weight:400;color:#333333;font-family:'Liberation Sans', sans-serif;">lot_0</div>
<div class="t " style="left:678.0px;top:461.5px;font-size:35.2px;line-height:35.2px;font-weight:400;color:#333333;font-family:'Liberation Sans', sans-serif;">wafer_0_0</div>
<div class="t " style="left:984.0px;top:461.5px;font-size:35.2px;line-height:35.2px;font-weight:400;color:#333333;font-family:'Liberation Sans', sans-serif;">die_(-1::2)</div>
<div class="t " style="left:1201.0px;top:460.1px;font-size:36.8px;line-height:36.8px;font-weight:400;color:#333333;font-family:'Liberation Sans', sans-serif;">test_mzi</div>
<div class="t " style="left:1422.0px;top:459.8px;font-size:37.2px;line-height:37.2px;font-weight:400;color:#333333;font-family:'Liberation Sans', sans-serif;">-12.27335</div>
<div class="r" style="left:119.0px;top:531.4px;width:1754.0px;height:2.6px;background:#ebebeb;"></div>
<div class="t " style="left:144.7px;top:567.5px;font-size:36.1px;line-height:36.1px;font-weight:400;color:#333333;font-family:'Liberation Sans', sans-serif;">neff_test_key</div>
<div class="t " style="left:440.0px;top:568.3px;font-size:35.2px;line-height:35.2px;font-weight:400;color:#333333;font-family:'Liberation Sans', sans-serif;">lot_0</div>
<div class="t " style="left:678.0px;top:568.3px;font-size:35.2px;line-height:35.2px;font-weight:400;color:#333333;font-family:'Liberation Sans', sans-serif;">wafer_0_0</div>
<div class="t " style="left:984.0px;top:568.3px;font-size:35.2px;line-height:35.2px;font-weight:400;color:#333333;font-family:'Liberation Sans', sans-serif;">die_(-1::2)</div>
<div class="t " style="left:1201.0px;top:566.9px;font-size:36.8px;line-height:36.8px;font-weight:400;color:#333333;font-family:'Liberation Sans', sans-serif;">test_ref</div>
<div class="t " style="left:1422.0px;top:566.6px;font-size:37.2px;line-height:37.2px;font-weight:400;color:#333333;font-family:'Liberation Sans', sans-serif;">-6.2318416</div>
<div class="r" style="left:119.0px;top:638.2px;width:1754.0px;height:2.6px;background:#ebebeb;"></div>
<div class="t " style="left:144.7px;top:674.3px;font-size:36.1px;line-height:36.1px;font-weight:400;color:#333333;font-family:'Liberation Sans', sans-serif;">neff_test_key</div>
<div class="t " style="left:440.0px;top:675.1px;font-size:35.2px;line-height:35.2px;font-weight:400;color:#333333;font-family:'Liberation Sans', sans-serif;">lot_0</div>
<div class="t " style="left:678.0px;top:675.1px;font-size:35.2px;line-height:35.2px;font-weight:400;color:#333333;font-family:'Liberation Sans', sans-serif;">wafer_0_0</div>
<div class="t " style="left:984.0px;top:675.1px;font-size:35.2px;line-height:35.2px;font-weight:400;color:#333333;font-family:'Liberation Sans', sans-serif;">die_(-2::-...</div>
<div class="t " style="left:1201.0px;top:673.7px;font-size:36.8px;line-height:36.8px;font-weight:400;color:#333333;font-family:'Liberation Sans', sans-serif;">test_mzi</div>
<div class="t " style="left:1422.0px;top:673.4px;font-size:37.2px;line-height:37.2px;font-weight:400;color:#333333;font-family:'Liberation Sans', sans-serif;">-12.10413</div>
<div class="r" style="left:119.0px;top:745.0px;width:1754.0px;height:2.6px;background:#ebebeb;"></div>
</div>
<div class="r" style="left:411.0px;top:1132.6px;width:2.5px;height:811.4px;background:#dde6f1;"></div>
<div class="r" style="left:649.0px;top:1132.6px;width:2.5px;height:811.4px;background:#dde6f1;"></div>
<div class="r" style="left:955.0px;top:1132.6px;width:2.5px;height:811.4px;background:#dde6f1;"></div>
<div class="r" style="left:1172.4px;top:1132.6px;width:2.5px;height:811.4px;background:#dde6f1;"></div>
<div class="r" style="left:1393.0px;top:1132.6px;width:2.5px;height:811.4px;background:#dde6f1;"></div>
<div class="r" style="left:1879.0px;top:1132.0px;width:34.0px;height:815.0px;background:#f5f5f7;"></div>
<div class="r" style="left:1879.0px;top:1132.0px;width:2.5px;height:815.0px;background:#d5d5da;"></div>
<div class="r" style="left:1879.0px;top:1944.5px;width:34.0px;height:2.5px;background:#d5d5da;"></div>
<svg class="r" style="left:1885.0px;top:1141.0px;width:20.0px;height:12.0px;" viewBox="0 0 20 12" preserveAspectRatio="none"><path d="M10 1 L19 11 L1 11 Z" fill="#c8c8cc"/></svg>
<div class="r" style="left:1885.4px;top:1168.0px;width:24.2px;height:153.0px;background:#c9c9cd;border-radius:12px"></div>
<svg class="r" style="left:1885.0px;top:1919.0px;width:20.0px;height:12.0px;" viewBox="0 0 20 12" preserveAspectRatio="none"><path d="M10 11 L19 1 L1 1 Z" fill="#c8c8cc"/></svg>
<div class="r" style="left:119.4px;top:2034.6px;width:215.0px;height:89.0px;background:#fff;border:3px solid #6366f1;border-radius:9px;box-sizing:border-box"></div>
<div class="t" style="left:-273.0px;width:1000px;text-align:center;top:2061.4px;font-size:36px;line-height:36px;font-weight:400;color:#6366f1;">Retry</div>
<div class="r" style="left:1692.0px;top:2034.4px;width:220.4px;height:89.6px;background:#fff;border:3px solid #d9d9d9;border-radius:9px;box-sizing:border-box"></div>
<div class="t" style="left:1302.0px;width:1000px;text-align:center;top:2061.1px;font-size:36px;line-height:36px;font-weight:400;color:#1a1a1a;">Close</div>
</div>
</body></html>
